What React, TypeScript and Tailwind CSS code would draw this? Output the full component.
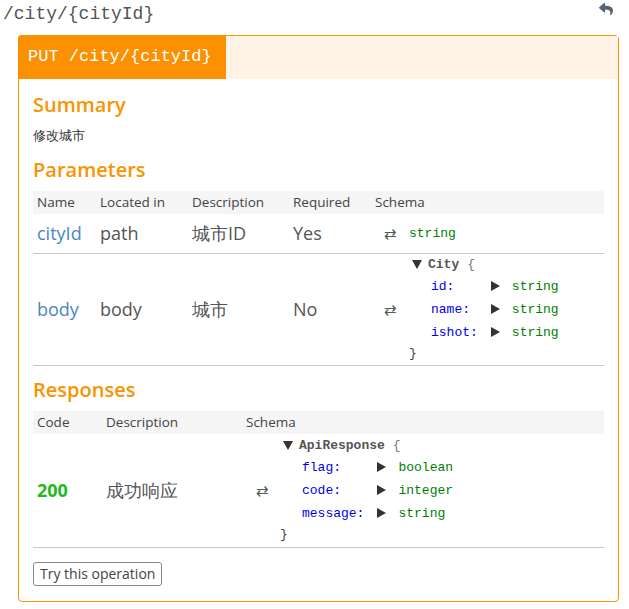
import React from "react";
import { FaReply } from "react-icons/fa";

const mono = { fontFamily: '"Liberation Mono", "DejaVu Sans Mono", monospace' };

type Prop = { key: string; type: string };

const Down = () => (
   <svg width="10" height="9" viewBox="0 0 10 9" className="shrink-0">
      <path d="M0 0H10L5 9Z" fill="#333" />
   </svg>
);

const Right = () => (
   <svg width="9" height="10" viewBox="0 0 9 10" className="shrink-0">
      <path d="M0 0L9 5L0 10Z" fill="#333" />
   </svg>
);

const Model = ({ name, props }: { name: string; props: Prop[] }) => {
   return (
      <div className="text-[13px] leading-none" style={mono}>
         <div className="h-[20px] flex items-center text-[#555]">
            <Down />
            <span className="font-bold ml-[6px]">{name}</span>
            <span className="ml-[8px] text-[#777]">{"{"}</span>
         </div>
         <div className="grid grid-cols-[auto_auto_auto] w-max pl-[19px]">
            {props.map((p) => (
               <React.Fragment key={p.key}>
                  <div className="h-[23px] flex items-center text-[#0000ee] pr-[13px]">{p.key}:</div>
                  <div className="h-[23px] flex items-center pr-[12px]">
                     <Right />
                  </div>
                  <div className="h-[23px] flex items-center text-[#008000]">{p.type}</div>
               </React.Fragment>
            ))}
         </div>
         <div className="h-[20px] flex items-center text-[#444] -ml-[3px]">{"}"}</div>
      </div>
   );
};

const Arrow = () => <span className="text-[15px] text-[#4d5d4d] leading-none">⇄</span>;

const App = () => {
   return (
      <div className="w-[629px] h-[609px] bg-white" style={{ fontFamily: '"Open Sans", sans-serif' }}>
         <div className="flex justify-between items-center h-[28px] pl-[3px] pr-[16px]">
            <h1 className="text-[18px] text-[#555]" style={mono}>
               /city/{"{cityId}"}
            </h1>
            <FaReply className="text-[#59636d] w-[14px] h-[14px] -mt-[10px]" />
         </div>
         <div className="ml-[18px] mt-[7px] w-[601px] border border-[#fa9300] rounded-[4px]">
            <div className="flex h-[43px] bg-[#fef3e5]">
               <div
                  className="bg-[#fb9000] text-white text-[17px] flex items-center px-[10px] w-[208px] -ml-px -mt-px rounded-tl-[4px]"
                  style={mono}
               >
                  PUT /city/{"{cityId}"}
               </div>
            </div>
            <div className="px-[14px] pb-[15px]">
               <h2 className="mt-[13px] text-[20px] leading-[26px] font-semibold text-[#fa9300]">Summary</h2>
               <p className="mt-[7px] text-[13px] leading-[20px] text-[#333]">修改城市</p>
               <h2 className="mt-[12px] text-[20px] leading-[26px] font-semibold text-[#fa9300]">Parameters</h2>
               <table className="mt-[8px] w-full table-fixed border-collapse">
                  <colgroup>
                     <col className="w-[63px]" />
                     <col className="w-[92px]" />
                     <col className="w-[101px]" />
                     <col className="w-[82px]" />
                     <col />
                  </colgroup>
                  <thead>
                     <tr className="bg-[#f5f5f5] h-[23px] text-[13.5px] text-[#444] text-left">
                        <th className="font-normal pl-[4px]">Name</th>
                        <th className="font-normal pl-[4px]">Located in</th>
                        <th className="font-normal pl-[4px]">Description</th>
                        <th className="font-normal pl-[4px]">Required</th>
                        <th className="font-normal pl-[4px]">Schema</th>
                     </tr>
                  </thead>
                  <tbody className="text-[18px] text-[#555]">
                     <tr className="h-[39px] border-b border-[#c8c8c8]">
                        <td className="pl-[4px] text-[#4a87c2]">cityId</td>
                        <td className="pl-[4px]">path</td>
                        <td className="pl-[4px]">城市ID</td>
                        <td className="pl-[4px]">Yes</td>
                        <td className="pl-[13px]">
                           <div className="flex items-center gap-[12px]">
                              <Arrow />
                              <span className="text-[13px] text-[#008000]" style={mono}>string</span>
                           </div>
                        </td>
                     </tr>
                     <tr className="h-[112px] border-b border-[#c8c8c8]">
                        <td className="pl-[4px] text-[#4a87c2]">body</td>
                        <td className="pl-[4px]">body</td>
                        <td className="pl-[4px]">城市</td>
                        <td className="pl-[4px]">No</td>
                        <td className="pl-[13px]">
                           <div className="flex items-center gap-[15px]">
                              <Arrow />
                              <Model
                                 name="City"
                                 props={[
                                    { key: "id", type: "string" },
                                    { key: "name", type: "string" },
                                    { key: "ishot", type: "string" },
                                 ]}
                              />
                           </div>
                        </td>
                     </tr>
                  </tbody>
               </table>
               <h2 className="mt-[11px] text-[20px] leading-[26px] font-semibold text-[#fa9300]">Responses</h2>
               <table className="mt-[8px] w-full table-fixed border-collapse">
                  <colgroup>
                     <col className="w-[69px]" />
                     <col className="w-[140px]" />
                     <col />
                  </colgroup>
                  <thead>
                     <tr className="bg-[#f5f5f5] h-[23px] text-[13.5px] text-[#444] text-left">
                        <th className="font-normal pl-[4px]">Code</th>
                        <th className="font-normal pl-[4px]">Description</th>
                        <th className="font-normal pl-[4px]">Schema</th>
                     </tr>
                  </thead>
                  <tbody className="text-[18px] text-[#555]">
                     <tr className="h-[114px] border-b border-[#c8c8c8]">
                        <td className="pl-[4px] font-bold text-[#1dbb1d]">200</td>
                        <td className="pl-[4px]">成功响应</td>
                        <td className="pl-[14px]">
                           <div className="flex items-center gap-[14px]">
                              <Arrow />
                              <Model
                                 name="ApiResponse"
                                 props={[
                                    { key: "flag", type: "boolean" },
                                    { key: "code", type: "integer" },
                                    { key: "message", type: "string" },
                                 ]}
                              />
                           </div>
                        </td>
                     </tr>
                  </tbody>
               </table>
               <button className="mt-[14px] h-[24px] px-[6px] border border-[#888] rounded-[3px] text-[14px] text-[#444] leading-none bg-white">
                  Try this operation
               </button>
            </div>
         </div>
      </div>
   );
};

export default App;
